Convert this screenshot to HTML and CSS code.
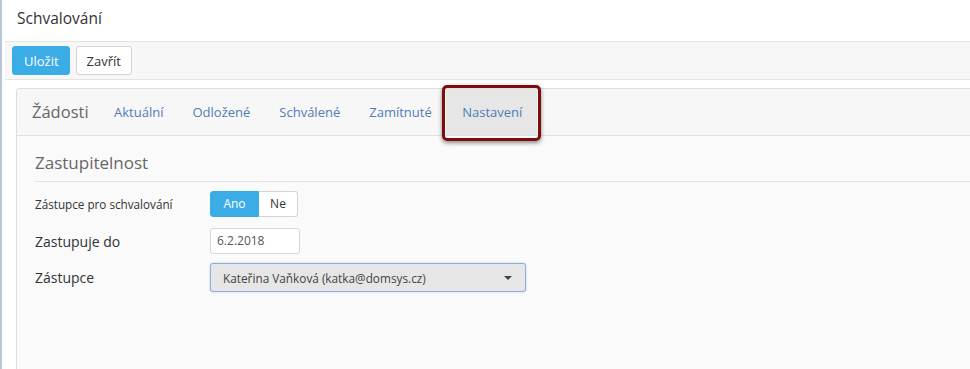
FILE: index.html
```html
<!DOCTYPE html>
<html lang="cs">
<head>
<meta charset="UTF-8" />
<title>Schvalování</title>
<link rel="stylesheet" href="styles.css">
</head>
<body>
<div class="page">
    <h1 class="page-title">Schvalování</h1>

    <div class="toolbar">
        <button class="btn btn-primary">Uložit</button>
        <button class="btn">Zavřít</button>
    </div>

    <div class="panel">
        <div class="panel-tabs">
            <span class="panel-name">Žádosti</span>
            <a class="tab">Aktuální</a>
            <a class="tab">Odložené</a>
            <a class="tab">Schválené</a>
            <a class="tab">Zamítnuté</a>
            <a class="tab active">Nastavení<span class="highlight"></span></a>
        </div>

        <div class="panel-body">
            <h2 class="section-title">Zastupitelnost</h2>

            <div class="form-row row-toggle">
                <label class="small">Zástupce pro schvalování</label>
                <div class="switch">
                    <span class="switch-on">Ano</span>
                    <span class="switch-off">Ne</span>
                </div>
            </div>

            <div class="form-row row-date">
                <label>Zastupuje do</label>
                <div class="input">6.2.2018</div>
            </div>

            <div class="form-row row-select">
                <label>Zástupce</label>
                <div class="select">
                    <span>Kateřina Vaňková (katka@domsys.cz)</span>
                    <span class="caret"></span>
                </div>
            </div>
        </div>
    </div>
</div>
</body>
</html>
```
FILE: styles.css
```css
/* Base */
body {
    margin: 0;
    font-family: 'Open Sans', 'DejaVu Sans', sans-serif;
    color: #333;
    background: #fff;
    overflow: hidden;
}

.page {
    height: 369px;
    border-left: 2px solid #b7c7d7;
}

.page-title {
    margin: 0;
    height: 41px;
    padding-left: 15px;
    font-size: 15.5px;
    font-weight: normal;
    line-height: 37px;
    color: #333;
}

/* Toolbar */
.toolbar {
    margin-left: 3px;
    padding: 4px 7px;
    display: flex;
    gap: 6px;
    background: #f7f7f7;
    border-top: 1px solid #e4e4e4;
    border-bottom: 1px solid #e4e4e4;
}

.btn {
    height: 29px;
    padding: 0 10px;
    font-family: inherit;
    font-size: 13px;
    color: #333;
    background: #fff;
    border: 1px solid #d4d4d4;
    border-radius: 3px;
}

.btn-primary {
    color: #fff;
    background: #3aace6;
    border-color: #3aace6;
    padding: 0 10px 0 11px;
}

/* Panel with tabs */
.panel {
    margin: 8px 0 0 14px;
    height: 280px;
    background: #fafafa;
    border: 1px solid #dedede;
    border-right: none;
    border-bottom: none;
    border-radius: 4px 0 0 0;
}

.panel-tabs {
    display: flex;
    align-items: stretch;
    height: 46px;
    background: #f7f7f7;
    border-bottom: 1px solid #e0e0e0;
    border-radius: 4px 0 0 0;
}

.panel-name {
    padding: 0 11px 0 15px;
    font-size: 16.5px;
    line-height: 46px;
    color: #666;
}

.tab {
    position: relative;
    padding: 0 14.5px;
    font-size: 13px;
    line-height: 46px;
    color: #4d7db8;
}

.tab.active {
    background: #e6e6e6;
    padding: 0 15px 0 16px;
}

/* red annotation frame around the active tab */
.highlight {
    position: absolute;
    left: -4px;
    right: -4px;
    top: -4px;
    bottom: -6px;
    border: 3px solid #7d0c0c;
    border-radius: 5px;
    box-shadow: 0 2px 4px rgba(0, 0, 0, 0.45);
}

/* Settings form */
.panel-body {
    padding: 14px 0 0 18px;
}

.section-title {
    margin: 0 0 9px;
    padding-bottom: 5px;
    font-size: 17px;
    font-weight: normal;
    line-height: 26px;
    color: #666;
    border-bottom: 1px solid #e2e2e2;
}

.form-row {
    display: flex;
    align-items: center;
}

.form-row label {
    width: 175px;
    font-size: 14px;
}

.form-row label.small {
    font-size: 11.7px;
}

.row-date {
    margin-top: 11px;
}

.row-select {
    margin-top: 9px;
}

.switch {
    display: flex;
    height: 26px;
    font-size: 12px;
    line-height: 24px;
}

.switch-on {
    width: 47px;
    text-align: center;
    color: #fff;
    background: #3aace6;
    border: 1px solid #3aace6;
    border-radius: 3px 0 0 3px;
}

.switch-off {
    width: 38px;
    text-align: center;
    background: #fff;
    border: 1px solid #d4d4d4;
    border-left: none;
    border-radius: 0 3px 3px 0;
}

.input {
    box-sizing: border-box;
    width: 90px;
    height: 26px;
    padding-left: 6px;
    font-size: 12px;
    line-height: 24px;
    color: #555;
    background: #fff;
    border: 1px solid #d6d6d6;
    border-radius: 3px;
}

.select {
    box-sizing: border-box;
    display: flex;
    align-items: center;
    justify-content: space-between;
    width: 316px;
    height: 29px;
    padding: 0 13px 0 12px;
    font-size: 11.8px;
    color: #444;
    background: #e6e6e6;
    border: 1px solid #8eaedb;
    border-radius: 3px;
    box-shadow: 0 0 2px #a5c0e6;
}

.caret {
    width: 0;
    height: 0;
    border-left: 4px solid transparent;
    border-right: 4px solid transparent;
    border-top: 4px solid #444;
}
```
